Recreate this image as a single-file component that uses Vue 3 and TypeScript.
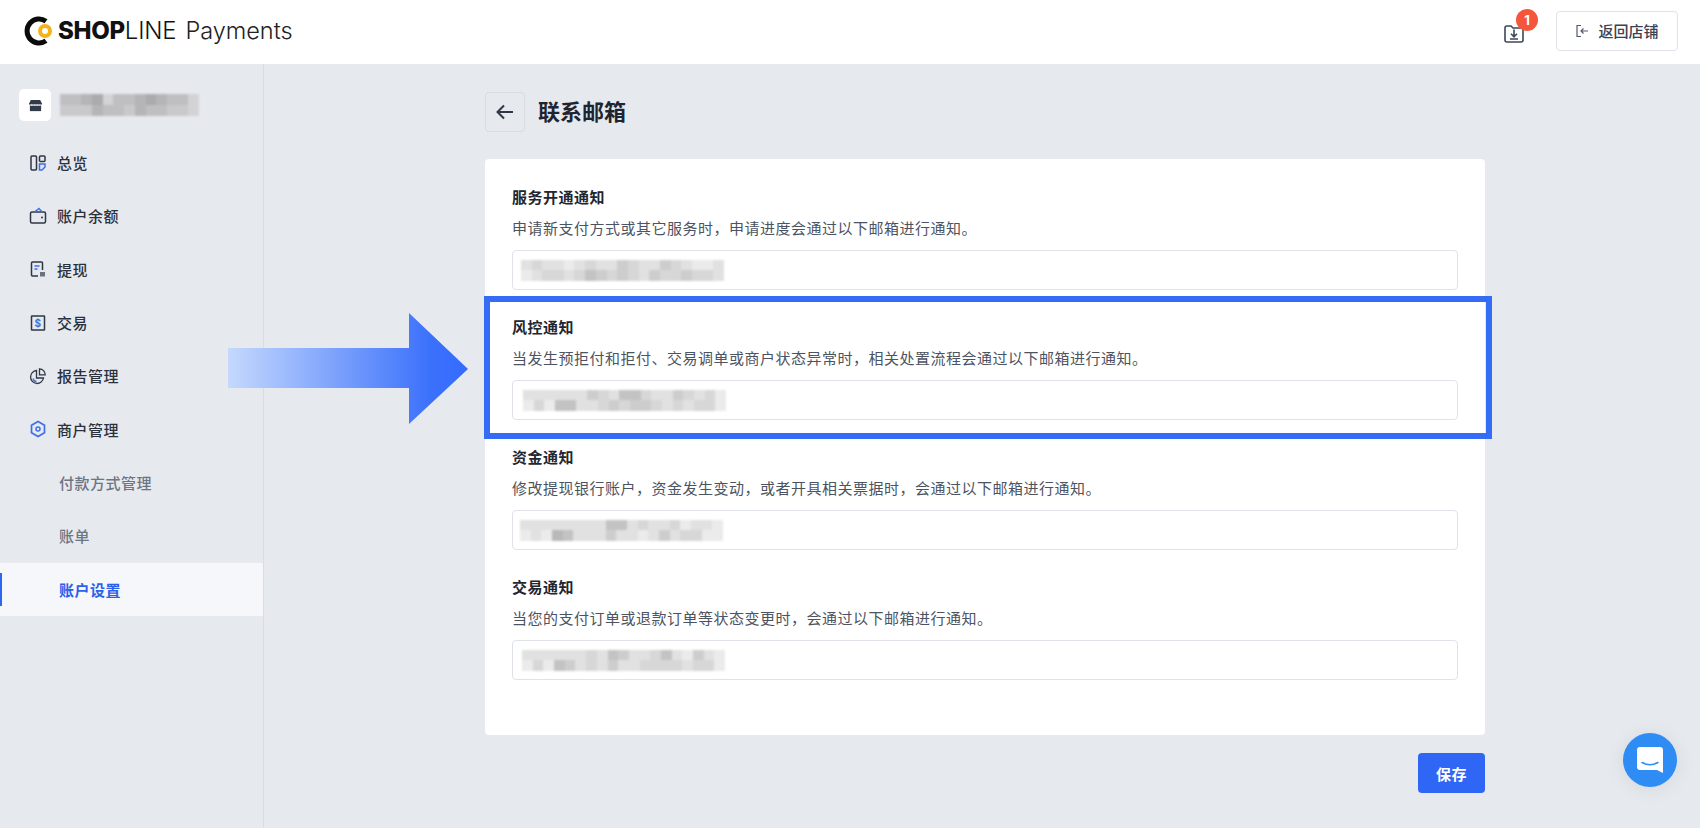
<script setup lang="ts">
import { computed } from 'vue'

interface Section { title: string; desc: string; pixels: string[]; indent: number }

const menu = [
  { key: 'overview', label: '总览' },
  { key: 'wallet', label: '账户余额' },
  { key: 'withdraw', label: '提现' },
  { key: 'trade', label: '交易' },
  { key: 'report', label: '报告管理' },
  { key: 'merchant', label: '商户管理' },
]
const subMenu = ['付款方式管理', '账单']

const sections: Section[] = [
  {
    title: '服务开通通知',
    desc: '申请新支付方式或其它服务时，申请进度会通过以下邮箱进行通知。',
    pixels: ['2322123224322432112', '1233235434324334332'],
    indent: 8,
  },
  {
    title: '风控通知',
    desc: '当发生预拒付和拒付、交易调单或商户状态异常时，相关处置流程会通过以下邮箱进行通知。',
    pixels: ['2222224325532243231', '1315522343443232331'],
    indent: 10,
  },
  {
    title: '资金通知',
    desc: '修改提现银行账户，资金发生变动，或者开具相关票据时，会通过以下邮箱进行通知。',
    pixels: ['2222222255232231221', '1216522242212423311'],
    indent: 7,
  },
  {
    title: '交易通知',
    desc: '当您的支付订单或退款订单等状态变更时，会通过以下邮箱进行通知。',
    pixels: ['2222223254223521421', '1315423242233332331'],
    indent: 9,
  },
]

const storePixels = ['3345133454331', '2224332433221']

const cells = (rows: string[]) =>
  rows.flatMap((row) => row.split('').map((d) => 245 - Number(d) * 10))

const sectionCells = computed(() => sections.map((s) => cells(s.pixels)))
const storeCells = computed(() => cells(storePixels).map((v) => v - 24))
</script>

<template>
  <div class="page">
    <header class="topbar">
      <div class="brand">
        <svg class="brand-mark" viewBox="0 0 30 30" width="30" height="30">
          <path d="M22 5.200A12 12 0 1 0 22 24.800" fill="none" stroke="#0b0b0b" stroke-width="5" />
          <circle cx="21" cy="15" r="5" fill="none" stroke="#f5b21a" stroke-width="4" />
        </svg>
        <span class="brand-shop">SHOP</span><span class="brand-line">LINE</span>
        <span class="brand-pay">Payments</span>
      </div>
      <div class="top-actions">
        <div class="download">
          <svg viewBox="0 0 20 20" width="20" height="20" fill="none" stroke="#3f4757" stroke-width="1.600">
            <path d="M1 5a2 2 0 0 1 2-2h4l2 2h8a2 2 0 0 1 2 2v10a2 2 0 0 1-2 2H3a2 2 0 0 1-2-2z" />
            <path d="M10 6.500v7M7 10.800l3 3 3-3M6 16h8" />
          </svg>
          <span class="badge">1</span>
        </div>
        <button class="store-btn">
          <svg viewBox="0 0 14 14" width="14" height="14" fill="none" stroke="#535b6b" stroke-width="1.200">
            <path d="M6 1.500H2v11h4M13 7H6M8.500 4.500 6 7l2.500 2.500" />
          </svg>
          <span>返回店铺</span>
        </button>
      </div>
    </header>

    <div class="body">
      <aside class="sidebar">
        <div class="store">
          <div class="store-icon">
            <svg viewBox="0 0 16 16" width="15" height="15">
              <path d="M3 2h10l2 4v1H1V6z" fill="#333b4a" />
              <path d="M2 8h12v6H2z" fill="#333b4a" />
              <path d="M3 7.600h10" stroke="#fff" stroke-width="1" stroke-dasharray="2 1" />
            </svg>
          </div>
          <div class="pixels store-pixels">
            <i v-for="(v, i) in storeCells" :key="i" :style="{ background: `rgb(${v},${v},${v + 3})` }" />
          </div>
        </div>

        <nav class="menu">
          <div v-for="item in menu" :key="item.key" class="menu-row">
            <svg class="menu-icon" viewBox="0 0 18 18" width="18" height="18" fill="none" stroke="#2f3645" stroke-width="1.500">
              <template v-if="item.key === 'overview'">
                <rect x="2" y="2" width="5.500" height="14" rx="1" />
                <rect x="10.500" y="2" width="5.500" height="5.500" rx="1" />
                <path d="M10.500 10h5.500v3l-3 3h-2.500z" stroke="#3f6fe8" />
              </template>
              <template v-else-if="item.key === 'wallet'">
                <rect x="1.500" y="5" width="15" height="11" rx="1.500" />
                <path d="M5.500 5 10 1.500 13 5" stroke="#3f6fe8" />
                <circle cx="13" cy="10.500" r="1" fill="#2f3645" stroke="none" />
              </template>
              <template v-else-if="item.key === 'withdraw'">
                <path d="M9 16H3.500a1 1 0 0 1-1-1V3a1 1 0 0 1 1-1h9a1 1 0 0 1 1 1v7" />
                <path d="M5.500 6h5M5.500 9h3" stroke="#3f6fe8" />
                <rect x="11" y="12" width="5" height="4.500" fill="#6b7280" stroke="none" />
              </template>
              <template v-else-if="item.key === 'trade'">
                <rect x="2.500" y="2" width="13" height="14" rx="0.500" />
                <text x="9" y="12.800" class="dollar">$</text>
              </template>
              <template v-else-if="item.key === 'report'">
                <path d="M7.500 3.500a6.500 6.500 0 1 0 7 7.500H7.500z" stroke-width="1.300" />
                <path d="M10.500 1.800a6 6 0 0 1 5.700 6h-5.700z" stroke-width="1.300" />
                <path d="M4 11.500a4 4 0 0 0 3.500 3" stroke="#3f6fe8" stroke-width="1.300" />
              </template>
              <template v-else>
                <path d="M9 1.500 15.500 5.200v7.600L9 16.500 2.500 12.800V5.200z" stroke="#3f6fe8" stroke-width="1.700" />
                <circle cx="9" cy="9" r="2" stroke="#3f6fe8" />
              </template>
            </svg>
            <span>{{ item.label }}</span>
          </div>
          <div v-for="label in subMenu" :key="label" class="menu-row sub">{{ label }}</div>
          <div class="menu-row sub active">账户设置</div>
        </nav>
      </aside>

      <main class="main">
        <div class="title-row">
          <button class="back">
            <svg viewBox="0 0 20 20" width="20" height="20" fill="none" stroke="#2f3645" stroke-width="2">
              <path d="M18 10H2.500M9 3.500 2.500 10 9 16.500" />
            </svg>
          </button>
          <h1>联系邮箱</h1>
        </div>

        <section class="card">
          <div v-for="(s, idx) in sections" :key="s.title" class="field">
            <div class="field-title">{{ s.title }}</div>
            <div class="field-desc">{{ s.desc }}</div>
            <div class="field-input">
              <div class="pixels" :style="{ marginLeft: s.indent + 'px' }">
                <i v-for="(v, i) in sectionCells[idx]" :key="i" :style="{ background: `rgb(${v},${v},${v})` }" />
              </div>
            </div>
          </div>
        </section>

        <div class="actions">
          <button class="save">保存</button>
        </div>
      </main>
    </div>

    <div class="highlight" />
    <svg class="arrow" viewBox="0 0 240 111" width="240" height="111">
      <defs>
        <linearGradient id="arrow-fill" x1="0" y1="0" x2="1" y2="0">
          <stop offset="0" stop-color="#c5d9fd" />
          <stop offset="0.85" stop-color="#3a70fb" />
          <stop offset="1" stop-color="#356cff" />
        </linearGradient>
      </defs>
      <path d="M0 35h181V0l59 56-59 55V75H0z" fill="url(#arrow-fill)" />
    </svg>

    <div class="chat">
      <svg viewBox="0 0 26 26" width="26" height="26">
        <path d="M3 0h20a3 3 0 0 1 3 3v23l-6-3H3a3 3 0 0 1-3-3V3a3 3 0 0 1 3-3z" fill="#fff" />
        <path d="M5 15.500q8 4.500 16 0" fill="none" stroke="#2f8cf5" stroke-width="1.500" stroke-linecap="round" />
      </svg>
    </div>
  </div>
</template>

<style>
html, body { margin: 0; overflow: hidden; }
</style>

<style scoped>
.page {
  position: relative;
  width: 1700px;
  height: 828px;
  overflow: hidden;
  background: #e6e9ee;
  color: #2a303c;
  font-family: Inter, "Noto Sans CJK SC", sans-serif;
  font-size: 15px;
  letter-spacing: 0.5px;
}

/* top bar */
.topbar {
  height: 64px;
  background: #fff;
  display: flex;
  align-items: center;
  justify-content: space-between;
  padding: 0 22px 3px 24px;
  box-sizing: border-box;
}
.brand { display: flex; align-items: baseline; color: #111; letter-spacing: 0; }
.brand-mark { align-self: center; margin-right: 4px; }
.brand-shop { font-size: 24px; font-weight: 800; letter-spacing: -0.3px; }
.brand-line { font-size: 24px; font-weight: 300; letter-spacing: -0.2px; }
.brand-pay { font-size: 23.500px; font-weight: 300; margin-left: 9px; color: #222; }

.top-actions { display: flex; align-items: center; gap: 32px; }
.download { position: relative; width: 20px; height: 20px; margin-top: 4px; }
.badge {
  position: absolute;
  left: 12px;
  top: -14px;
  width: 22px;
  height: 22px;
  border-radius: 50%;
  background: #f4553b;
  color: #fff;
  font-size: 13px;
  font-weight: 700;
  line-height: 22px;
  text-align: center;
  letter-spacing: 0;
}
.store-btn {
  width: 122px;
  height: 40px;
  display: flex;
  align-items: center;
  justify-content: center;
  gap: 9px;
  background: #fff;
  border: 1px solid #dfe2e8;
  border-radius: 4px;
  color: #3a4150;
  font: 500 15px Inter, "Noto Sans CJK SC", sans-serif;
}

.body { display: flex; height: 764px; }

/* sidebar */
.sidebar {
  width: 264px;
  box-sizing: border-box;
  border-right: 1px solid #d8dce3;
  flex-shrink: 0;
}
.store {
  display: flex;
  align-items: center;
  gap: 9px;
  padding: 25px 0 0 19px;
}
.store-icon {
  width: 32px;
  height: 32px;
  background: #fff;
  border-radius: 5px;
  display: flex;
  align-items: center;
  justify-content: center;
}
.menu { margin-top: 15px; }
.menu-row {
  height: 53.330px;
  display: flex;
  align-items: center;
  gap: 10px;
  padding-left: 29px;
  font-weight: 500;
  color: #2a303c;
}
.menu-icon { flex-shrink: 0; }
.dollar { font: 700 10px Inter, sans-serif; fill: #3f6fe8; stroke: none; text-anchor: middle; }
.menu-row.sub { padding-left: 59px; color: #6d7483; }
.menu-row.sub.active {
  position: relative;
  background: #f5f7fb;
  color: #2b60ea;
  font-weight: 600;
}
.menu-row.sub.active::before {
  content: "";
  position: absolute;
  left: 0;
  top: 10px;
  bottom: 10px;
  width: 2px;
  background: #2f66f0;
}

/* main column */
.main { padding-left: 221px; width: 1000px; box-sizing: content-box; }
.title-row { display: flex; align-items: center; gap: 13px; padding-top: 28px; }
.back {
  width: 40px;
  height: 40px;
  display: flex;
  align-items: center;
  justify-content: center;
  padding: 0;
  background: transparent;
  border: 1px solid #d8dce3;
  border-radius: 4px;
}
h1 { margin: 0; font-size: 22px; line-height: 30px; font-weight: 600; color: #1f2530; letter-spacing: 0; }

.card {
  margin-top: 27px;
  background: #fff;
  border-radius: 4px;
  padding: 28px 27px 55px;
  display: flex;
  flex-direction: column;
  gap: 27px;
}
.field-title { line-height: 22px; font-weight: 600; color: #22262f; }
.field-desc { margin-top: 9px; line-height: 22px; color: #4c5361; }
.field-input {
  margin-top: 10px;
  height: 40px;
  box-sizing: border-box;
  border: 1px solid #dfe2e8;
  border-radius: 4px;
  display: flex;
  align-items: center;
}
.pixels {
  display: grid;
  grid-template-columns: repeat(19, 10.700px);
  grid-auto-rows: 10.500px;
  filter: blur(0.8px);
}
.pixels i { display: block; }
.store-pixels {
  grid-template-columns: repeat(13, 10.700px);
  grid-auto-rows: 11px;
}

.actions { display: flex; justify-content: flex-end; margin-top: 18px; }
.save {
  width: 67px;
  height: 40px;
  border: none;
  border-radius: 4px;
  background: #2f66f6;
  color: #fff;
  font: 600 15px Inter, "Noto Sans CJK SC", sans-serif;
  letter-spacing: 0.5px;
}

/* annotation drawn over the page */
.highlight {
  position: absolute;
  left: 484px;
  top: 296px;
  width: 1008px;
  height: 143px;
  box-sizing: border-box;
  border: 6px solid #356cf6;
}
.arrow { position: absolute; left: 228px; top: 313px; filter: blur(0.4px); }

.chat {
  position: absolute;
  left: 1623px;
  top: 733px;
  width: 54px;
  height: 54px;
  border-radius: 50%;
  background: #2f8cf5;
  box-shadow: 0 2px 20px rgba(0, 0, 0, 0.08);
  display: flex;
  align-items: center;
  justify-content: center;
}
</style>
